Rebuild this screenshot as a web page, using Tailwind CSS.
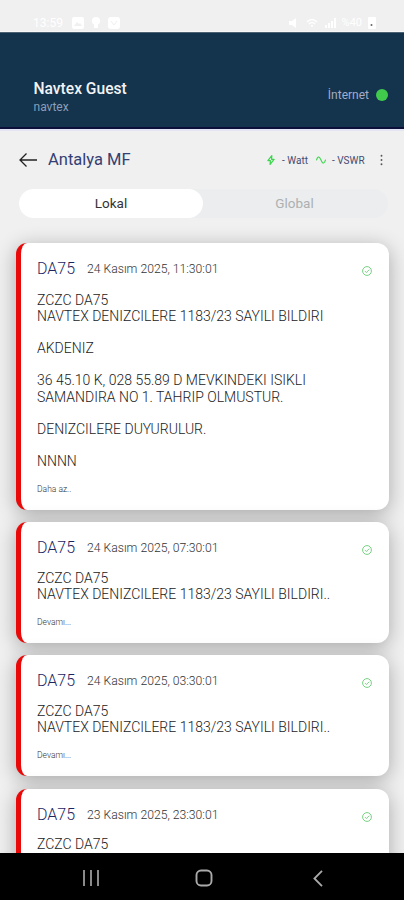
<!DOCTYPE html>
<html lang="tr">
<head>
    <meta charset="UTF-8">
    <meta name="viewport" content="width=device-width, initial-scale=1.0">
    <title>Navtex</title>
    <script src="https://cdn.jsdelivr.net/npm/@tailwindcss/browser@4"></script>
</head>
<body class="bg-[#f0f0f0] font-['Roboto',sans-serif] w-[404px] h-[900px] overflow-hidden flex flex-col">

    <!-- Status bar -->
    <div class="h-8 shrink-0 border-b border-[#f8f8f8] pl-[33px] pr-7 pt-[15px] flex items-center justify-between text-white text-xs">
        <div class="flex items-center gap-1.5">
            <span class="w-[33px]">13:59</span>
            <svg class="w-3 h-3" viewBox="0 0 12 12"><rect width="12" height="12" rx="2" fill="#fff"/><path d="M2 9l3-4 2 2 1-1 2 3z" fill="#f0f0f0"/></svg>
            <svg class="w-3 h-3" viewBox="0 0 12 12"><circle cx="6" cy="4" r="4" fill="#fff"/><path d="M4 6h4v5H4z" fill="#fff"/></svg>
            <svg class="w-3 h-3" viewBox="0 0 12 12"><rect width="12" height="12" rx="3" fill="#fff"/><path d="M3 4l3 4 3-4" stroke="#f0f0f0" fill="none"/></svg>
        </div>
        <div class="flex items-center gap-1.5">
            <svg class="w-3 h-3" viewBox="0 0 12 12"><path d="M1 4h3l4-3v10L4 8H1z" fill="#fff"/></svg>
            <svg class="w-3 h-3" viewBox="0 0 12 12" fill="none" stroke="#fff" stroke-width="1.5"><path d="M1 5q5-5 10 0M3 7q3-3 6 0M5 9h2"/></svg>
            <svg class="w-3 h-3" viewBox="0 0 12 12" fill="#fff"><path d="M1 8h2v3H1zM4 6h2v5H4zM7 4h2v7H7zM10 1h2v10h-2z"/></svg>
            <span class="text-[11px]">%40</span>
            <svg class="w-2 h-3" viewBox="0 0 8 12"><rect width="8" height="12" rx="1" fill="#fff"/><circle cx="3.5" cy="8" r="1" fill="#666"/></svg>
        </div>
    </div>

    <!-- Header -->
    <header class="h-[97px] shrink-0 bg-[#14334c] border-t border-t-[#4d6273] border-b-2 border-b-[#0a103a] pl-[33.5px] pr-4 flex justify-between">
        <div class="pt-[45.5px]">
            <h1 class="text-[15.6px] leading-5 font-medium text-[#f1f3f6]">Navtex Guest</h1>
            <p class="text-[12px] leading-4 text-[#8c9fb9]">navtex</p>
        </div>
        <div class="flex items-center gap-[7px] h-4 mt-[54px]">
            <span class="text-[12px] text-[#a2adc9]">İnternet</span>
            <span class="w-3 h-3 rounded-full bg-[#40cb4d]"></span>
        </div>
    </header>

    <!-- Station title -->
    <div class="h-[60px] shrink-0 border-t-2 border-[#e3e4f4] pl-[19px] pr-5 flex items-center">
        <svg class="w-[18px] h-4" viewBox="0 0 18 16" fill="none" stroke="#222" stroke-width="1.3"><path d="M7.5 1.5L1 8l6.5 6.5M1 8h17"/></svg>
        <h2 class="ml-[11px] text-[16.5px] text-[#343f74]">Antalya MF</h2>
        <div class="ml-auto flex items-center text-[10px] text-[#454b70]">
            <svg class="w-2 h-[10px]" viewBox="0 0 8 10" fill="none" stroke="#3bd64c" stroke-width="1.2" stroke-linejoin="round"><path d="M4.8 .6L.9 5.6h2.5L3.1 9.4 7.1 4.4H4.6z"/></svg>
            <span class="ml-[7px] w-[27px] whitespace-nowrap">- Watt</span>
            <svg class="ml-[7px] w-[10px] h-2" viewBox="0 0 10 8" fill="none" stroke="#3bd64c" stroke-width="1.1"><path d="M.4 4.3C1.5.6 3-.2 4.4 2.8L5.6 5.2C7 8.2 8.5 7.4 9.6 3.7"/></svg>
            <span class="ml-1.5 w-[34px] whitespace-nowrap">- VSWR</span>
            <svg class="ml-[13px] w-[5px] h-3" viewBox="0 0 5 12" fill="#555"><circle cx="2.5" cy="1.8" r=".95"/><circle cx="2.5" cy="6" r=".95"/><circle cx="2.5" cy="10.2" r=".95"/></svg>
        </div>
    </div>

    <!-- Tabs -->
    <div class="ml-[19px] mr-4 h-[29px] shrink-0 rounded-full bg-[#ebedee] flex text-[13.5px]">
        <div class="w-[184px] rounded-full bg-white text-[#333] flex items-center justify-center">Lokal</div>
        <div class="w-[183px] text-[#adb0b2] flex items-center justify-center">Global</div>
    </div>

    <!-- Messages -->
    <main class="flex-1 min-h-0 overflow-hidden pt-[25px] pl-4 pr-[15px] flex flex-col gap-3">
        <article class="h-[267px] shrink-0 rounded-l-[11px] rounded-r-xl border-l-[5px] border-[#ea0909] bg-white shadow-[0_4px_20px_rgba(0,0,0,0.3)] pt-4 pl-4 pr-[17px]">
            <div class="h-5 flex items-center">
                <span class="w-[50px] text-[16px] font-light text-[#1d2561]">DA75</span>
                <span class="text-[12.2px] font-light text-[#333]">24 Kasım 2025, 11:30:01</span>
                <svg class="ml-auto mt-1 w-[10px] h-[10px]" viewBox="0 0 10 10" fill="none" stroke="#68cc76" stroke-width=".9"><circle cx="5" cy="5" r="4.4"/><path d="M3 5.1l1.4 1.4L7.2 3.7"/></svg>
            </div>
            <p class="mt-[13px] text-[14px] leading-[16.1px] font-light text-[#222] whitespace-pre">ZCZC DA75
NAVTEX DENIZCILERE 1183/23 SAYILI BILDIRI

AKDENIZ

36 45.10 K, 028 55.89 D MEVKINDEKI ISIKLI
SAMANDIRA NO 1. TAHRIP OLMUSTUR.

DENIZCILERE DUYURULUR.

NNNN</p>
            <p class="mt-[14px] text-[8.5px] leading-3 font-light text-[#333]">Daha az..</p>
        </article>

        <article class="h-[121px] shrink-0 rounded-l-[11px] rounded-r-xl border-l-[5px] border-[#ea0909] bg-white shadow-[0_4px_20px_rgba(0,0,0,0.3)] pt-4 pl-4 pr-[17px]">
            <div class="h-5 flex items-center">
                <span class="w-[50px] text-[16px] font-light text-[#1d2561]">DA75</span>
                <span class="text-[12.2px] font-light text-[#333]">24 Kasım 2025, 07:30:01</span>
                <svg class="ml-auto mt-1 w-[10px] h-[10px]" viewBox="0 0 10 10" fill="none" stroke="#68cc76" stroke-width=".9"><circle cx="5" cy="5" r="4.4"/><path d="M3 5.1l1.4 1.4L7.2 3.7"/></svg>
            </div>
            <p class="mt-3 text-[14px] leading-[16.1px] font-light text-[#222] whitespace-pre">ZCZC DA75
NAVTEX DENIZCILERE 1183/23 SAYILI BILDIRI..</p>
            <p class="mt-[14px] text-[8.5px] leading-3 font-light text-[#333]">Devamı...</p>
        </article>

        <article class="h-[121px] shrink-0 rounded-l-[11px] rounded-r-xl border-l-[5px] border-[#ea0909] bg-white shadow-[0_4px_20px_rgba(0,0,0,0.3)] pt-4 pl-4 pr-[17px]">
            <div class="h-5 flex items-center">
                <span class="w-[50px] text-[16px] font-light text-[#1d2561]">DA75</span>
                <span class="text-[12.2px] font-light text-[#333]">24 Kasım 2025, 03:30:01</span>
                <svg class="ml-auto mt-1 w-[10px] h-[10px]" viewBox="0 0 10 10" fill="none" stroke="#68cc76" stroke-width=".9"><circle cx="5" cy="5" r="4.4"/><path d="M3 5.1l1.4 1.4L7.2 3.7"/></svg>
            </div>
            <p class="mt-3 text-[14px] leading-[16.1px] font-light text-[#222] whitespace-pre">ZCZC DA75
NAVTEX DENIZCILERE 1183/23 SAYILI BILDIRI..</p>
            <p class="mt-[14px] text-[8.5px] leading-3 font-light text-[#333]">Devamı...</p>
        </article>

        <article class="mt-px h-[121px] shrink-0 rounded-l-[11px] rounded-r-xl border-l-[5px] border-[#ea0909] bg-white shadow-[0_4px_20px_rgba(0,0,0,0.3)] pt-4 pl-4 pr-[17px]">
            <div class="h-5 flex items-center">
                <span class="w-[50px] text-[16px] font-light text-[#1d2561]">DA75</span>
                <span class="text-[12.2px] font-light text-[#333]">23 Kasım 2025, 23:30:01</span>
                <svg class="ml-auto mt-1 w-[10px] h-[10px]" viewBox="0 0 10 10" fill="none" stroke="#68cc76" stroke-width=".9"><circle cx="5" cy="5" r="4.4"/><path d="M3 5.1l1.4 1.4L7.2 3.7"/></svg>
            </div>
            <p class="mt-[11px] text-[14px] leading-[16.1px] font-light text-[#222]">ZCZC DA75</p>
        </article>
    </main>

    <!-- Android navigation -->
    <nav class="h-[47px] shrink-0 bg-black flex items-center pl-[83px] pt-[3px]">
        <svg class="w-4 h-4" viewBox="0 0 16 16" stroke="#999" stroke-width="1.8"><path d="M1 0v16M8 0v16M15 0v16"/></svg>
        <svg class="ml-24 w-[18px] h-[18px]" viewBox="0 0 18 18" fill="none" stroke="#aaa" stroke-width="1.9"><rect x="1.5" y="1.5" width="15" height="15" rx="4.5"/></svg>
        <svg class="ml-[100px] w-[10px] h-[17px]" viewBox="0 0 10 17" fill="none" stroke="#aaa" stroke-width="1.8"><path d="M9 .8L1.4 8.5 9 16.2"/></svg>
    </nav>
</body>
</html>
